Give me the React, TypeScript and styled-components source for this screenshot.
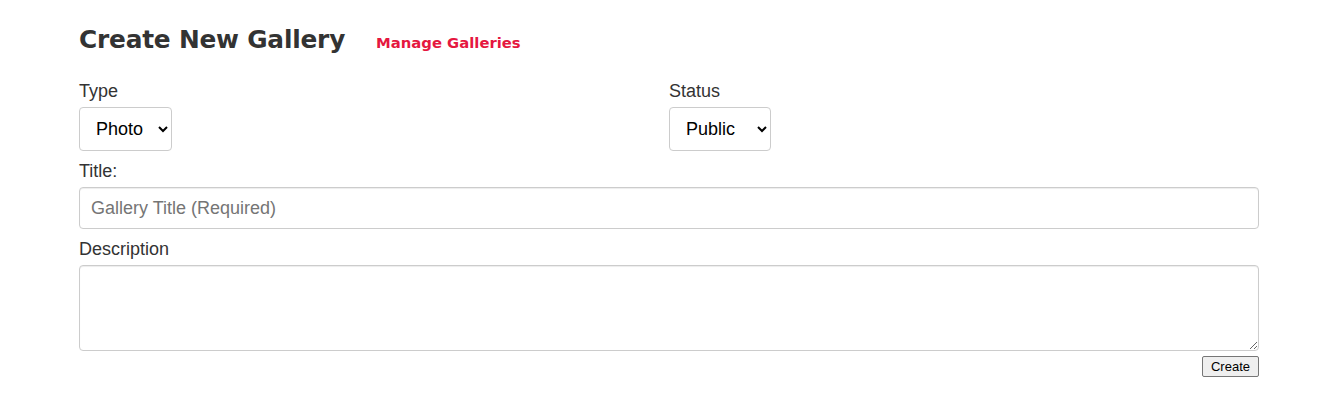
import React from "react";
import styled, { createGlobalStyle } from "styled-components";

const GlobalStyle = createGlobalStyle`
  html, body { margin: 0; padding: 0; background: #ffffff; }
  body { font-family: "Liberation Sans", Arial, Helvetica, sans-serif; color: #333333; }
  * { box-sizing: border-box; }
`;

const Page = styled.div`
  padding: 25px 0 0 79px;
  width: 1259px;
`;

const Header = styled.div`
  display: flex;
  align-items: baseline;
  gap: 31px;
  margin-bottom: 23px;
`;

const Heading = styled.h2`
  margin: 0;
  font-family: "DejaVu Sans", sans-serif;
  font-weight: 700;
  font-size: 24.8px;
  line-height: 30px;
  color: #333333;
  letter-spacing: -0.2px;
`;

const ManageLink = styled.a`
  font-family: "DejaVu Sans", sans-serif;
  font-weight: 700;
  font-size: 14.8px;
  color: #e5173f;
  text-decoration: none;
  cursor: pointer;
`;

const Row = styled.div`
  display: grid;
  grid-template-columns: 1fr 1fr;
`;

const Group = styled.div`
  display: flex;
  flex-direction: column;
  align-items: flex-start;
  margin-bottom: 7px;
`;

const Label = styled.label`
  font-size: 18px;
  line-height: 26px;
  margin-bottom: 3px;
  color: #333333;
`;

const Select = styled.select<{ $width: number }>`
  width: ${(p) => p.$width}px;
  height: 44px;
  padding: 0 6px 0 12px;
  font-family: "Liberation Sans", Arial, sans-serif;
  font-size: 18px;
  color: #000000;
  background: #ffffff;
  border: 1px solid #cccccc;
  border-radius: 4px;
`;

const TextInput = styled.input`
  width: 100%;
  height: 42px;
  padding: 0 11px;
  font-family: "Liberation Sans", Arial, sans-serif;
  font-size: 18px;
  color: #555555;
  border: 1px solid #cccccc;
  border-radius: 4px;
  box-shadow: inset 0 1px 1px rgba(0, 0, 0, 0.075);
  &::placeholder { color: #757575; }
`;

const TextArea = styled.textarea`
  width: 100%;
  height: 86px;
  padding: 6px 11px;
  font-family: "Liberation Sans", Arial, sans-serif;
  font-size: 18px;
  border: 1px solid #cccccc;
  border-radius: 4px;
  box-shadow: inset 0 1px 1px rgba(0, 0, 0, 0.075);
  display: block;
`;

const Actions = styled.div`
  display: flex;
  justify-content: flex-end;
  margin-top: -2px;
`;

const SubmitButton = styled.button`
  font-family: "Liberation Sans", Arial, sans-serif;
  font-size: 13px;
  height: 21px;
  padding: 0 8px;
  color: #000000;
  background: #efefef;
  border: 1px solid #767676;
  border-radius: 2px;
`;

export default function App() {
  return (
    <>
      <GlobalStyle />
      <Page>
        <Header>
          <Heading>Create New Gallery</Heading>
          <ManageLink>Manage Galleries</ManageLink>
        </Header>
        <Row>
          <Group>
            <Label>Type</Label>
            <Select $width={93} defaultValue="photo">
              <option value="photo">Photo</option>
              <option value="video">Video</option>
            </Select>
          </Group>
          <Group>
            <Label>Status</Label>
            <Select $width={102} defaultValue="public">
              <option value="public">Public</option>
              <option value="private">Private</option>
            </Select>
          </Group>
        </Row>
        <Group>
          <Label>Title:</Label>
          <TextInput placeholder="Gallery Title (Required)" />
        </Group>
        <Group>
          <Label>Description</Label>
          <TextArea />
        </Group>
        <Actions>
          <SubmitButton>Create</SubmitButton>
        </Actions>
      </Page>
    </>
  );
}
